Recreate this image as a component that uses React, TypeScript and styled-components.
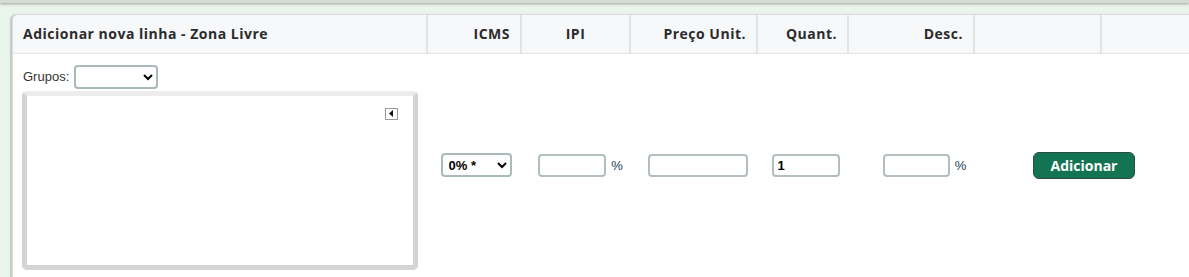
import React from 'react';
import styled, { createGlobalStyle } from 'styled-components';

const GlobalStyle = createGlobalStyle`
  html, body {
    margin: 0;
    padding: 0;
    overflow: hidden;
    background: #e9f4ea;
    font-family: 'Liberation Sans', Arial, sans-serif;
  }
`;

// faixa do painel de cima (só a borda inferior aparece)
const TopStrip = styled.div`
  height: 3px;
  background: #d5dbd5;
  box-shadow: 0 1px 3px rgba(0, 0, 0, 0.35);
`;

const Panel = styled.div`
  margin: 11px 0 0 12px;
  width: 1182px;
  background: #ffffff;
  border: 1px solid #d9dcd9;
  border-right: none;
  border-radius: 6px 0 0 0;
  box-shadow: -2px 0 1px rgba(120, 140, 120, 0.35);
  overflow: hidden;
`;

const Table = styled.table`
  border-collapse: collapse;
  table-layout: fixed;
  width: 1181px;
`;

const HeadCell = styled.th<{ $align?: string; $w: number }>`
  width: ${(p) => p.$w}px;
  height: 38px;
  box-sizing: border-box;
  padding: 0 10px;
  background: #f7f8fa;
  border-bottom: 1px solid #e4e6e8;
  border-left: 2px solid #e2e3e5;
  text-align: ${(p) => p.$align || 'right'};
  font-family: 'Open Sans', sans-serif;
  font-weight: 700;
  font-size: 14px;
  letter-spacing: 0.5px;
  color: #2b2b2b;
  &:first-child {
    border-left: none;
  }
`;

const Cell = styled.td<{ $pl?: number }>`
  padding: 0 0 0 ${(p) => p.$pl || 0}px;
  text-align: center;
  vertical-align: middle;
  white-space: nowrap;
`;

const GroupCell = styled.td`
  padding: 11px 0 7px 10px;
  vertical-align: top;
`;

const GroupLine = styled.div`
  display: flex;
  align-items: center;
  gap: 5px;
  height: 24px;
`;

const Label = styled.span`
  font-size: 13px;
  color: #333333;
`;

const Select = styled.select<{ $w: number }>`
  width: ${(p) => p.$w}px;
  height: 24px;
  box-sizing: border-box;
  border: 2px solid #aab9b9;
  border-radius: 4px;
  background: #ffffff;
  font-family: 'Liberation Sans', Arial, sans-serif;
  font-size: 13px;
  font-weight: 700;
  color: #000;
  padding: 0 2px;
`;

const GroupBox = styled.div`
  margin: 2px 0 0 -1px;
  width: 396px;
  height: 179px;
  box-sizing: border-box;
  border: 5px solid #d4d4d4;
  border-top-color: #ececec;
  border-radius: 5px;
  background: #ffffff;
  display: flex;
  justify-content: flex-end;
  align-items: flex-start;
  padding: 12px 15px;
`;

const ToggleButton = styled.div`
  width: 13px;
  height: 12px;
  box-sizing: border-box;
  border: 1px solid #9a9a9a;
  background: #ffffff;
  display: flex;
  align-items: center;
  justify-content: center;
`;

const Input = styled.input<{ $w: number }>`
  width: ${(p) => p.$w}px;
  height: 23px;
  box-sizing: border-box;
  border: 2px solid #b3bfbf;
  border-radius: 4px;
  background: #ffffff;
  font-family: 'Liberation Sans', Arial, sans-serif;
  font-size: 13px;
  font-weight: 700;
  padding: 0 4px;
  vertical-align: middle;
  outline: none;
`;

const Percent = styled.span`
  margin-left: 5px;
  font-size: 13px;
  color: #1a3c5c;
  vertical-align: middle;
`;

const AddButton = styled.button`
  width: 102px;
  height: 27px;
  background: #137453;
  border: 1px solid #2c4a3c;
  border-radius: 6px;
  color: #ffffff;
  font-family: 'Open Sans', sans-serif;
  font-weight: 700;
  font-size: 14px;
  cursor: pointer;
`;

const columns = [
  { title: 'Adicionar nova linha - Zona Livre', w: 414, align: 'left' },
  { title: 'ICMS', w: 94 },
  { title: 'IPI', w: 109, align: 'center' },
  { title: 'Preço Unit.', w: 127 },
  { title: 'Quant.', w: 91 },
  { title: 'Desc.', w: 126 },
  { title: '', w: 127 },
  { title: '', w: 93 },
];

function App() {
  return (
    <>
      <GlobalStyle />
      <TopStrip />
      <Panel>
        <Table>
          <thead>
            <tr>
              {columns.map((c, i) => (
                <HeadCell key={i} $w={c.w} $align={c.align}>
                  {c.title}
                </HeadCell>
              ))}
            </tr>
          </thead>
          <tbody>
            <tr>
              <GroupCell>
                <GroupLine>
                  <Label>Grupos:</Label>
                  <Select $w={84}>
                    <option value=""></option>
                  </Select>
                </GroupLine>
                <GroupBox>
                  <ToggleButton>
                    <svg width="5" height="7" viewBox="0 0 5 7">
                      <path d="M4 0 L0 3.5 L4 7 Z" fill="#111" />
                    </svg>
                  </ToggleButton>
                </GroupBox>
              </GroupCell>
              <Cell $pl={4}>
                <Select $w={71}>
                  <option>0% *</option>
                  <option>7%</option>
                  <option>12%</option>
                  <option>18%</option>
                </Select>
              </Cell>
              <Cell $pl={10}>
                <Input $w={68} />
                <Percent>%</Percent>
              </Cell>
              <Cell $pl={8}>
                <Input $w={100} />
              </Cell>
              <Cell $pl={6}>
                <Input $w={68} defaultValue="1" />
              </Cell>
              <Cell $pl={27}>
                <Input $w={67} />
                <Percent>%</Percent>
              </Cell>
              <Cell colSpan={2}>
                <AddButton>Adicionar</AddButton>
              </Cell>
            </tr>
          </tbody>
        </Table>
      </Panel>
    </>
  );
}

export default App;
